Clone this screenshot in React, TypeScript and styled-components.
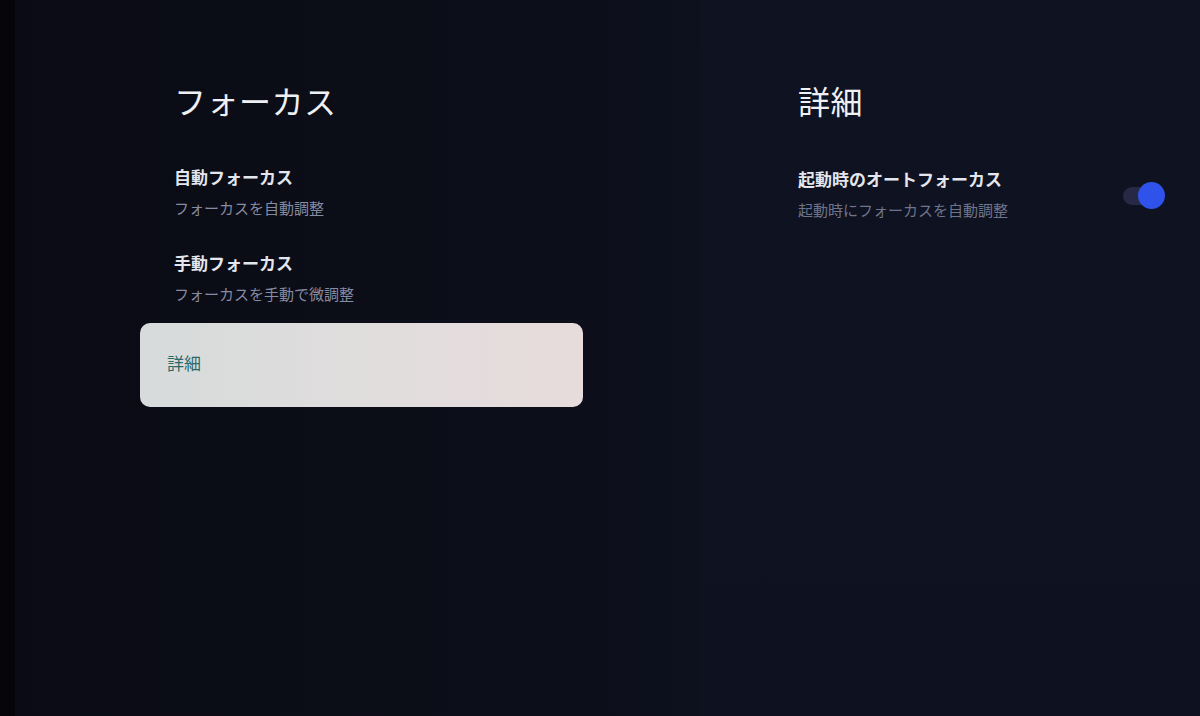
import React from "react";
import styled, { createGlobalStyle } from "styled-components";

const GlobalStyle = createGlobalStyle`
  html, body {
    margin: 0;
    padding: 0;
    background: #0c0e19;
    overflow: hidden;
  }
  body {
    font-family: "Noto Sans CJK JP", "Noto Sans", sans-serif;
    -webkit-font-smoothing: antialiased;
  }
`;

const Screen = styled.div`
  display: flex;
  width: 1200px;
  height: 716px;
  background: #0c0e19;
`;

const LeftPanel = styled.section`
  width: 700px;
  box-sizing: border-box;
  border-left: 15px solid #06060a;
  padding: 78px 0 0 125px;
  background: linear-gradient(90deg, #0a0b14 0%, #0c0e19 70%, #0d101d 100%);
`;

const RightPanel = styled.section`
  flex: 1;
  box-sizing: border-box;
  padding: 78px 35px 0 98px;
  background: linear-gradient(180deg, #0f1220 0%, #0e111f 100%);
`;

const Title = styled.h1<{ $indent?: number }>`
  margin: 0 0 0 ${(p) => p.$indent ?? 0}px;
  font-size: 32px;
  font-weight: 400;
  line-height: 44px;
  color: #eef0f4;
  letter-spacing: 0.5px;
`;

const List = styled.div`
  width: 443px;
  margin-top: 42px;
  display: flex;
  flex-direction: column;
`;

const Item = styled.div`
  height: 86px;
  padding: 0 34px;
  display: flex;
  flex-direction: column;
`;

const ItemTitle = styled.div`
  font-size: 17px;
  font-weight: 700;
  line-height: 26px;
  color: #e4e6ee;
`;

const ItemSub = styled.div<{ $dim?: boolean }>`
  margin-top: 7px;
  font-size: 15px;
  font-weight: 400;
  line-height: 22px;
  color: ${(p) => (p.$dim ? "#6f748c" : "#858ba3")};
`;

const FocusCard = styled.div`
  margin-top: -13px;
  height: 84px;
  box-sizing: border-box;
  padding: 0 27px 6px;
  display: flex;
  align-items: center;
  border-radius: 10px;
  background: linear-gradient(90deg, #d7dbdb 0%, #e1dddd 55%, #e7dbdb 100%);
  font-size: 17px;
  color: #2b6a6c;
`;

const SettingRow = styled.div`
  margin-top: 44px;
  display: flex;
  align-items: center;
  justify-content: space-between;
`;

const SettingText = styled.div`
  display: flex;
  flex-direction: column;
`;

const Toggle = styled.div`
  position: relative;
  width: 42px;
  height: 27px;
  margin-top: 4px;
  display: flex;
  align-items: center;
`;

const Track = styled.div`
  width: 34px;
  height: 18px;
  border-radius: 9px;
  background: #252946;
`;

const Knob = styled.div`
  position: absolute;
  right: 0;
  top: 0;
  width: 27px;
  height: 27px;
  border-radius: 50%;
  background: #2f52ea;
`;

export default function App() {
  return (
    <>
      <GlobalStyle />
      <Screen>
        <LeftPanel>
          <Title $indent={34}>フォーカス</Title>
          <List>
            <Item>
              <ItemTitle>自動フォーカス</ItemTitle>
              <ItemSub>フォーカスを自動調整</ItemSub>
            </Item>
            <Item>
              <ItemTitle>手動フォーカス</ItemTitle>
              <ItemSub>フォーカスを手動で微調整</ItemSub>
            </Item>
            <FocusCard>詳細</FocusCard>
          </List>
        </LeftPanel>
        <RightPanel>
          <Title>詳細</Title>
          <SettingRow>
            <SettingText>
              <ItemTitle>起動時のオートフォーカス</ItemTitle>
              <ItemSub $dim>起動時にフォーカスを自動調整</ItemSub>
            </SettingText>
            <Toggle>
              <Track />
              <Knob />
            </Toggle>
          </SettingRow>
        </RightPanel>
      </Screen>
    </>
  );
}
